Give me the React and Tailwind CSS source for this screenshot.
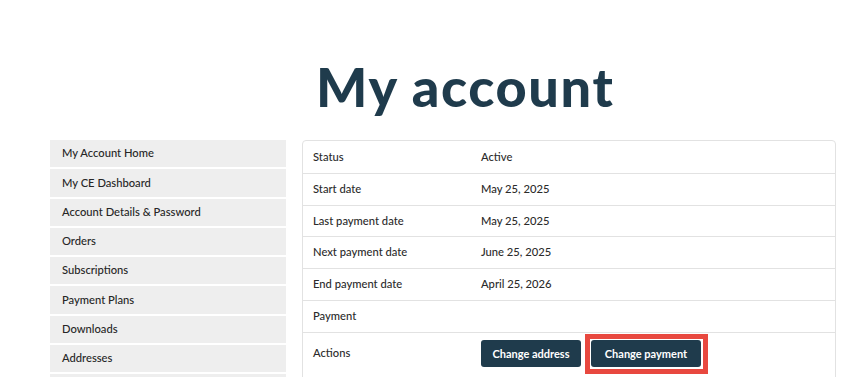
import React from 'react';

const MENU = [
  'My Account Home',
  'My CE Dashboard',
  'Account Details & Password',
  'Orders',
  'Subscriptions',
  'Payment Plans',
  'Downloads',
  'Addresses',
  '',
];

const ROWS = [
  ['Status', 'Active'],
  ['Start date', 'May 25, 2025'],
  ['Last payment date', 'May 25, 2025'],
  ['Next payment date', 'June 25, 2025'],
  ['End payment date', 'April 25, 2026'],
  ['Payment', ''],
];

export default function App() {
  return (
    <div className="h-[377px] overflow-hidden bg-white font-['Lato',sans-serif] text-[#2b2b2b]">
      <h1 className="pt-[57px] pl-[316px] text-[54px] leading-[60px] font-black tracking-[1.6px] text-[#1f3b4c]">
        My account
      </h1>

      <div className="mt-[23px] ml-[50px] flex w-[786px] gap-4">
        {/* sidebar */}
        <ul className="w-[236px] shrink-0">
          {MENU.map((m, i) => (
            <li
              key={i}
              className="mb-[2px] flex h-[27.3px] items-center bg-[#eeeeee] px-3 text-[11.2px] font-medium text-[#262626]"
            >
              {m}
            </li>
          ))}
        </ul>

        {/* subscription details */}
        <div className="flex-1 rounded-[4px] border border-[#e2e2e2] text-[11.2px] font-medium text-[#2b2b2b]">
          {ROWS.map(([k, v], i) => (
            <div
              key={k}
              className={`flex h-[31.8px] items-center ${i > 0 ? 'border-t border-[#e2e2e2]' : ''}`}
            >
              <div className="flex h-full w-[170px] items-center border-r border-white px-[10px]">{k}</div>
              <div className="px-[8px]">{v}</div>
            </div>
          ))}
          <div className="flex h-[43px] items-center border-t border-[#e2e2e2]">
            <div className="w-[170px] px-[10px]">Actions</div>
            <div className="flex gap-[10px] px-[8px]">
              <button
                type="button"
                className="h-[27px] w-[100px] rounded-[3px] bg-[#1f3b4c] text-[11px] font-bold text-white"
              >
                Change address
              </button>
              <span className="relative">
                <button
                  type="button"
                  className="h-[27px] w-[110px] rounded-[3px] bg-[#1f3b4c] text-[11px] font-bold text-white"
                >
                  Change payment
                </button>
                <span className="pointer-events-none absolute -top-[6px] -bottom-[7px] -left-[6px] -right-[7px] border-[5px] border-[#e8483f]" />
              </span>
            </div>
          </div>
        </div>
      </div>
    </div>
  );
}
